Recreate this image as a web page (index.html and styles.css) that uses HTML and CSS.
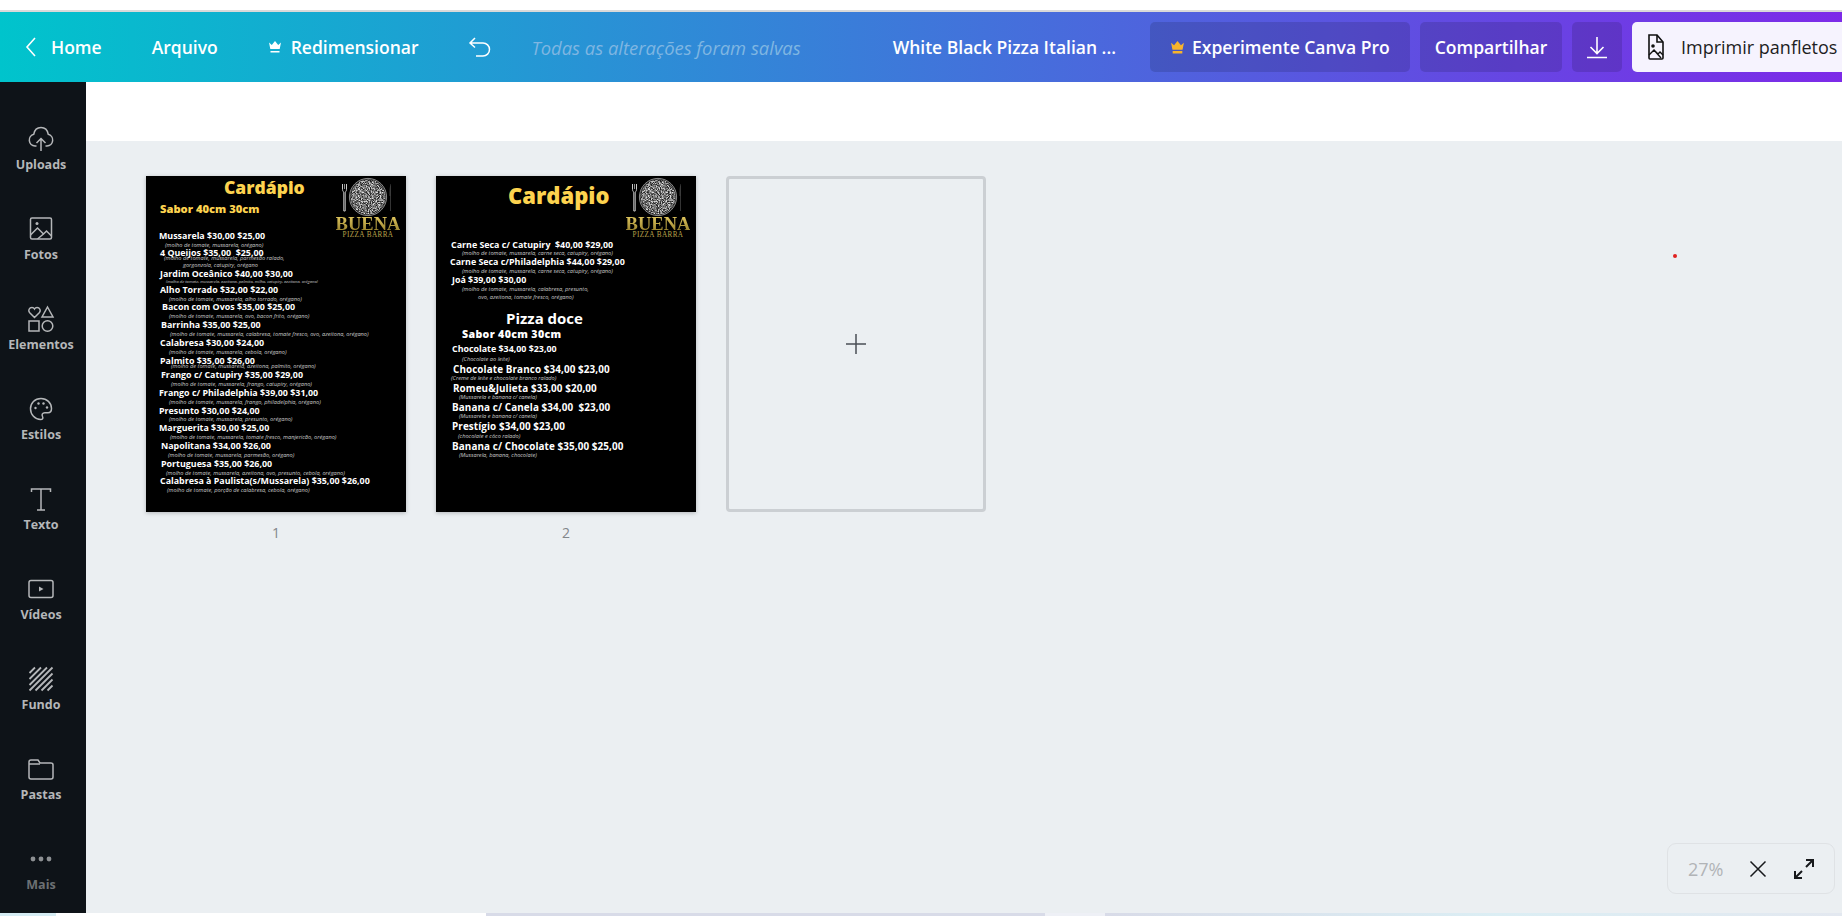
FILE: index.html
```html
<!DOCTYPE html>
<html lang="pt-BR">
<head>
<meta charset="utf-8">
<title>Canva</title>
<link rel="stylesheet" href="styles.css">
</head>
<body>
<svg class="defs" width="0" height="0" aria-hidden="true">
  <defs>
    <filter id="speckle" x="0" y="0" width="100%" height="100%">
      <feTurbulence type="fractalNoise" baseFrequency="0.9" numOctaves="2" seed="4"/>
      <feColorMatrix values="0 0 0 0 0.72  0 0 0 0 0.72  0 0 0 0 0.72  2.6 0 0 0 -0.85"/>
      <feComposite in2="SourceGraphic" operator="in"/>
    </filter>
    <symbol id="logo-art" viewBox="0 0 66 40">
      <circle cx="33" cy="20" r="18.5" fill="#222"/>
      <circle cx="33" cy="20" r="17.5" filter="url(#speckle)" fill="#888"/>
      <circle cx="33" cy="20" r="18.6" fill="none" stroke="#a8a8a8" stroke-width=".8"/>
      <path d="M7.5 7v5.5c0 1.4.8 2.2 1.3 2.6V34h1.4V15.100c.5-.4 1.300-1.200 1.300-2.600V7" fill="none" stroke="#c8c8c8" stroke-width="1"/>
      <path d="M9.500 7v5" stroke="#c8c8c8" stroke-width=".7"/>
      <path d="M55.500 7c-.9 3-1.100 7-1 12h.6v15h.9V7z" fill="#3a3a3a"/>
    </symbol>
  </defs>
</svg>

<div class="chrome-line"></div>
<header class="topbar">
  <nav class="nav">
    <svg class="ico-back" viewBox="0 0 12 22"><path d="M10 2 2 11l8 9" fill="none" stroke="#fff" stroke-width="1.600"/></svg>
    <span class="tb-text tb-home">Home</span>
    <span class="tb-text tb-file">Arquivo</span>
    <svg class="ico-crown" viewBox="0 0 14 14"><path d="M1 2.500 3.800 5 7 1l3.200 4L13 2.500l-1.300 6.500H2.300zM2.500 11h9v1.500h-9z" fill="#fff"/></svg>
    <span class="tb-text tb-resize">Redimensionar</span>
    <svg class="ico-undo" viewBox="0 0 24 22"><path d="M7 2 2 7l5 4.500M2.500 7H15a6.500 6.500 0 0 1 0 13H8" fill="none" stroke="#fff" stroke-width="1.500"/></svg>
    <span class="tb-saved">Todas as alterações foram salvas</span>
  </nav>
  <div class="actions">
    <span class="tb-text tb-title">White Black Pizza Italian ...</span>
    <button class="btn btn-pro"><svg class="ico-crown-gold" viewBox="0 0 14 14"><path d="M1 2.500 3.800 5 7 1l3.200 4L13 2.500l-1.300 6.500H2.300zM2.500 10.300h9v2.200h-9z" fill="#f8b42c"/></svg>Experimente Canva Pro</button>
    <button class="btn btn-share">Compartilhar</button>
    <button class="btn btn-dl"><svg class="ico-dl" viewBox="0 0 24 24"><path d="M12 2v16M5.500 12l6.500 6.500 6.500-6.500M2 22.500h20" fill="none" stroke="#fff" stroke-width="1.600"/></svg></button>
    <button class="btn btn-print"><svg class="ico-print" viewBox="0 0 18 26"><path d="M2 1h8l6 7v16a1 1 0 0 1-1 1H3a1 1 0 0 1-1-1z" fill="none" stroke="#111" stroke-width="1.600"/><path d="M10 1v7h6" fill="none" stroke="#111" stroke-width="1.600"/><circle cx="6" cy="12" r="1.800" fill="#111"/><path d="M2 21l5-5 4 4 2-2 3 3M7 16l7 8" fill="none" stroke="#111" stroke-width="1.400"/></svg>Imprimir panfletos</button>
  </div>
</header>

<div class="workspace">
  <aside class="sidebar">
    <div class="side-item">
      <svg class="side-ico" viewBox="0 0 28 28"><path d="M9.500 21H8a6 6 0 0 1-1.200-11.800C7.500 5 10.300 2.500 14 2.500s6.500 2.500 7.200 6.700A6 6 0 0 1 20 21h-1.500M14 26V14M9.500 18l4.500-4.500 4.500 4.500"/></svg>
      <span class="side-label">Uploads</span>
    </div>
    <div class="side-item">
      <svg class="side-ico" viewBox="0 0 28 28"><rect x="3.500" y="3" width="21" height="21" rx="1.500"/><path d="M3.500 20l7-7 6 6 3-3 5 5M10.500 24l6-5"/><circle cx="10" cy="8.500" r="1.500" class="fill"/></svg>
      <span class="side-label">Fotos</span>
    </div>
    <div class="side-item">
      <svg class="side-ico" viewBox="0 0 28 28"><path d="M7.500 12.500 2.500 7.500C.8 5.500 2.300 2.500 5 2.500c1.100 0 2 .6 2.500 1.500C8 3.100 8.900 2.500 10 2.500c2.700 0 4.200 3 2.500 5z"/><path d="M20.500 2 26 12H15z"/><rect x="2" y="16" width="10" height="10"/><circle cx="20.500" cy="21" r="5.300"/></svg>
      <span class="side-label">Elementos</span>
    </div>
    <div class="side-item">
      <svg class="side-ico" viewBox="0 0 28 28"><path d="M14 3.500C7.800 3.500 3.500 8 3.500 13.800c0 5.800 4.500 10.700 10 10.700 2.300 0 2.800-1.600 2-3-1-1.800 0-3.800 2.300-3.800h3.200c2.400 0 3.500-1.800 3.500-4.200C24.500 7.800 19.800 3.500 14 3.500z"/><circle cx="8.500" cy="13" r="1.200" class="fill"/><circle cx="11.500" cy="8.500" r="1.200" class="fill"/><circle cx="16.500" cy="8.500" r="1.200" class="fill"/><circle cx="20" cy="12.500" r="1.200" class="fill"/></svg>
      <span class="side-label">Estilos</span>
    </div>
    <div class="side-item">
      <svg class="side-ico" viewBox="0 0 28 28"><path d="M4.500 7V4h19v3M14 4v21M10 25h8"/></svg>
      <span class="side-label">Texto</span>
    </div>
    <div class="side-item">
      <svg class="side-ico" viewBox="0 0 28 28"><rect x="2" y="5.500" width="24" height="17" rx="2"/><path d="M12 11.500v5l4.500-2.500z" class="fill"/></svg>
      <span class="side-label">Vídeos</span>
    </div>
    <div class="side-item">
      <svg class="side-ico" viewBox="0 0 28 28"><path d="M2.500 8 8 2.500M2.500 14 14 2.500M2.500 20 20 2.500M2.500 25.500 25.500 2.500M8.500 25.500l17-17M14.500 25.500l11-11M20.500 25.500l5-5" stroke-width="1.800"/></svg>
      <span class="side-label">Fundo</span>
    </div>
    <div class="side-item">
      <svg class="side-ico" viewBox="0 0 28 28"><path d="M2 7a2 2 0 0 1 2-2h7l2 3h11a2 2 0 0 1 2 2v12a2 2 0 0 1-2 2H4a2 2 0 0 1-2-2z"/><path d="M2 9h11"/></svg>
      <span class="side-label">Pastas</span>
    </div>
    <div class="side-item side-more">
      <svg class="side-ico" viewBox="0 0 28 28"><circle cx="6" cy="14" r="2.400" class="fill"/><circle cx="14" cy="14" r="2.400" class="fill"/><circle cx="22" cy="14" r="2.400" class="fill"/></svg>
      <span class="side-label">Mais</span>
    </div>
  </aside>

  <main class="main">
    <div class="white-strip"></div>
    <div class="canvas">
      <section class="thumb">
        <div class="page">
          <h2 class="line title p1-title">Cardápio</h2>
          <p class="line head p1-head">Sabor 40cm 30cm</p>
          <div class="logo"><svg class="logo-art"><use href="#logo-art"/></svg><span class="logo-name">BUENA</span><span class="logo-sub">PIZZA BARRA</span></div>
          <p class="line item a1">Mussarela $30,00 $25,00</p>
          <p class="line sub b1">(molho de tomate, mussarela, orégano)</p>
          <p class="line item a2">4 Queijos $35,00&nbsp; $25,00</p>
          <p class="line sub b2">(molho de tomate, mussarela, parmesão ralado,</p>
          <p class="line sub b2x">gorgonzola, catupiry, orégano</p>
          <p class="line item a3">Jardim Oceânico $40,00 $30,00</p>
          <p class="line sub tiny b3">(molho de tomate, mussarela, azeitona, palmito, milho, catupiry, azeitona, orégano)</p>
          <p class="line item a4">Alho Torrado $32,00 $22,00</p>
          <p class="line sub b4">(molho de tomate, mussarela, alho torrado, orégano)</p>
          <p class="line item a5">Bacon com Ovos $35,00 $25,00</p>
          <p class="line sub b5">(molho de tomate, mussarela, ovo, bacon frito, orégano)</p>
          <p class="line item a6">Barrinha $35,00 $25,00</p>
          <p class="line sub b6">(molho de tomate, mussarela, calabresa, tomate fresco, ovo, azeitona, orégano)</p>
          <p class="line item a7">Calabresa $30,00 $24,00</p>
          <p class="line sub b7">(molho de tomate, mussarela, cebola, orégano)</p>
          <p class="line item a8">Palmito $35,00 $26,00</p>
          <p class="line sub b8">(molho de tomate, mussarela, azeitona, palmito, orégano)</p>
          <p class="line item a9">Frango c/ Catupiry $35,00 $29,00</p>
          <p class="line sub b9">(molho de tomate, mussarela, frango, catupiry, orégano)</p>
          <p class="line item a10">Frango c/ Philadelphia $39,00 $31,00</p>
          <p class="line sub b10">(molho de tomate, mussarela, frango, philadelphia, orégano)</p>
          <p class="line item a11">Presunto $30,00 $24,00</p>
          <p class="line sub b11">(molho de tomate, mussarela, presunto, orégano)</p>
          <p class="line item a12">Marguerita $30,00 $25,00</p>
          <p class="line sub b12">(molho de tomate, mussarela, tomate fresco, manjericão, orégano)</p>
          <p class="line item a13">Napolitana $34,00 $26,00</p>
          <p class="line sub b13">(molho de tomate, mussarela, parmesão, orégano)</p>
          <p class="line item a14">Portuguesa $35,00 $26,00</p>
          <p class="line sub b14">(molho de tomate, mussarela, azeitona, ovo, presunto, cebola, orégano)</p>
          <p class="line item a15">Calabresa à Paulista(s/Mussarela) $35,00 $26,00</p>
          <p class="line sub b15">(molho de tomate, porção de calabresa, cebola, orégano)</p>
        </div>
        <span class="page-num">1</span>
      </section>

      <section class="thumb">
        <div class="page">
          <h2 class="line title p2-title">Cardápio</h2>
          <div class="logo"><svg class="logo-art"><use href="#logo-art"/></svg><span class="logo-name">BUENA</span><span class="logo-sub">PIZZA BARRA</span></div>
          <p class="line item c1">Carne Seca c/ Catupiry&nbsp; $40,00 $29,00</p>
          <p class="line sub d1">(molho de tomate, mussarela, carne seca, catupiry, orégano)</p>
          <p class="line item c2">Carne Seca c/Philadelphia $44,00 $29,00</p>
          <p class="line sub d2">(molho de tomate, mussarela, carne seca, catupiry, orégano)</p>
          <p class="line item c3">Joá $39,00 $30,00</p>
          <p class="line sub d3">(molho de tomate, mussarela, calabresa, presunto,</p>
          <p class="line sub d3x">ovo, azeitona, tomate fresco, orégano)</p>
          <p class="line doce">Pizza doce</p>
          <p class="line head p2-head">Sabor 40cm 30cm</p>
          <p class="line item c4">Chocolate $34,00 $23,00</p>
          <p class="line sub d4">(Chocolate ao leite)</p>
          <p class="line item wide c5">Chocolate Branco $34,00 $23,00</p>
          <p class="line sub d5">(Creme de leite e chocolate branco ralado)</p>
          <p class="line item wide c6">Romeu&amp;Julieta $33,00 $20,00</p>
          <p class="line sub d6">(Mussarela e banana c/ canela)</p>
          <p class="line item wide c7">Banana c/ Canela $34,00&nbsp; $23,00</p>
          <p class="line sub d7">(Mussarela e banana c/ canela)</p>
          <p class="line item wide c8">Prestígio $34,00 $23,00</p>
          <p class="line sub d8">(chocolate e côco ralado)</p>
          <p class="line item wide c9">Banana c/ Chocolate $35,00 $25,00</p>
          <p class="line sub d9">(Mussarela, banana, chocolate)</p>
        </div>
        <span class="page-num">2</span>
      </section>

      <button class="add-page"><svg class="ico-plus" viewBox="0 0 20 20"><path d="M10 0v20M0 10h20" fill="none" stroke="#4a4f55" stroke-width="1.500"/></svg></button>

      <span class="red-dot"></span>
      <div class="zoom-panel">
        <span class="zoom-val">27%</span>
        <svg class="ico-x" viewBox="0 0 18 18"><path d="M1.500 1.500l15 15M16.500 1.500l-15 15" fill="none" stroke="#17191c" stroke-width="1.500"/></svg>
        <svg class="ico-expand" viewBox="0 0 22 22"><path d="M13 2h7v7M20 2l-7 7M2 13v7h7M2 20l7-7" fill="none" stroke="#17191c" stroke-width="2"/></svg>
      </div>
    </div>
  </main>
</div>
<div class="bottom-strip"></div>
</body>
</html>
```
FILE: styles.css
```css
* { box-sizing: border-box; }
html, body { margin: 0; padding: 0; height: 100%; overflow: hidden; }
body {
  width: 1842px; height: 916px; display: flex; flex-direction: column;
  background: #fff; font-family: "Open Sans", "Liberation Sans", sans-serif;
}
.defs { position: absolute; }

.chrome-line { height: 12px; flex: none; background: #fff; border-bottom: 2px solid #d9d9d9; }

.topbar {
  height: 70px; flex: none; display: flex; align-items: center; justify-content: space-between;
  background: linear-gradient(90deg, #00c4cc 0%, #7d2ae8 100%);
  color: #fff;
}
.nav { display: flex; align-items: center; padding-left: 25px; }
.actions { display: flex; align-items: center; }
.tb-text { font-size: 17.500px; font-weight: 600; white-space: nowrap; }
.ico-back { width: 12px; height: 22px; }
.tb-home { margin-left: 14px; }
.tb-file { margin-left: 50px; }
.ico-crown { width: 14px; height: 14px; margin-left: 50px; }
.tb-resize { margin-left: 9px; }
.ico-undo { width: 24px; height: 22px; margin-left: 49px; }
.tb-saved { margin-left: 40px; font-size: 18.400px; font-style: italic; color: #7fb6e2; white-space: nowrap; }
.tb-title { margin-right: 34px; }

.btn {
  height: 50px; border: 0; border-radius: 5px; color: #fff; font: 600 17.500px "Open Sans", sans-serif;
  display: flex; align-items: center; background: rgba(0, 0, 0, .13); padding: 0; margin-left: 10px; white-space: nowrap;
}
.btn-pro { width: 260px; padding-left: 20px; margin-left: 0; }
.ico-crown-gold { width: 15px; height: 15px; margin-right: 7px; }
.btn-share { width: 142px; justify-content: center; }
.btn-dl { width: 50px; justify-content: center; }
.ico-dl { width: 24px; height: 24px; }
.btn-print {
  width: 210px; padding-left: 15px; background: #f6f3fe; color: #1d1d22; font-weight: 400; font-size: 18px;
  border-radius: 5px 0 0 5px;
}
.ico-print { width: 18px; height: 26px; margin-right: 16px; }

.workspace { flex: 1; display: flex; min-height: 0; }
.sidebar {
  width: 86px; flex: none; background: #0e1318; padding: 43px 4px 0 0;
  display: flex; flex-direction: column; align-items: center;
}
.side-item { height: 90px; flex: none; display: flex; flex-direction: column; align-items: center; gap: 4px; }
.side-ico { width: 28px; height: 28px; fill: none; stroke: #b5b7b9; stroke-width: 1.5; }
.side-ico .fill { fill: #b5b7b9; stroke: none; }
.side-label { font-size: 12.500px; line-height: 16px; font-weight: 700; color: #b5b7b9; }
.side-more .side-label { color: #6c7073; }
.side-more .side-ico .fill { fill: #8d9093; }

.main { flex: 1; display: flex; flex-direction: column; min-width: 0; }
.white-strip { height: 59px; flex: none; background: #fff; }
.canvas {
  position: relative; flex: 1; display: flex; gap: 30px; align-items: flex-start;
  background: #ebeff2; padding: 35px 60px;
}
.thumb { display: flex; flex-direction: column; align-items: center; }
.page {
  position: relative; width: 260px; height: 336px; background: #000; overflow: hidden;
  box-shadow: 0 1px 4px rgba(14, 19, 24, .25);
}
.page-num { margin-top: 11px; font-size: 14px; line-height: 20px; color: #82868a; }
.add-page {
  width: 260px; height: 336px; padding: 0; background: transparent; border: 3px solid #cbcfd3; border-radius: 4px;
  display: flex; align-items: center; justify-content: center;
}
.ico-plus { width: 20px; height: 20px; }
.red-dot { position: absolute; left: 1587px; top: 113px; width: 4px; height: 4px; border-radius: 50%; background: #e02020; }
.zoom-panel {
  position: absolute; left: 1581px; top: 702px; width: 168px; height: 51px;
  border: 1px solid #dfe2e5; border-radius: 9px; background: #ebeff2;
  display: flex; align-items: center; padding-left: 20px;
}
.zoom-val { font-size: 18px; color: #b1b4b7; width: 61px; }
.ico-x { width: 18px; height: 18px; }
.ico-expand { width: 22px; height: 22px; margin-left: 26px; }

.bottom-strip {
  height: 3px; flex: none;
  background: linear-gradient(90deg, #d5ecf3 0 56px, #fff 56px 486px, #d8dbe8 486px 1045px, #eef0f6 1045px 1105px, #d8dbe8 1105px, #dbeef4 1500px, #e3e8f0 100%);
}

/* Design pages: a free canvas, every line of text is placed on it */
.line { position: absolute; margin: 0; white-space: nowrap; line-height: 10px; }
.title { color: #fdd34f; font-weight: 800; line-height: 26px; }
.head { color: #fdd34f; font-size: 11.200px; font-weight: 800; line-height: 14px; }
.item { color: #fff; font-size: 8.900px; font-weight: 700; }
.item.wide { font-size: 9.900px; letter-spacing: .1px; }
.sub { color: #c9c9c9; font-size: 5.650px; font-style: italic; }
.sub.tiny { font-size: 4.100px; }

.p1-title { left: 78px; top: -2px; font-size: 17.500px; }
.p1-head { left: 14px; top: 26px; }
.p2-title { left: 72px; top: 6px; font-size: 22px; }
.p2-head { left: 26px; top: 151px; color: #fff; font-size: 10.600px; letter-spacing: .35px; }
.doce { left: 70px; top: 134px; color: #fff; font-size: 15px; font-weight: 700; line-height: 16px; }

.logo { position: absolute; left: 189px; top: 1px; width: 66px; display: flex; flex-direction: column; align-items: center; }
.logo-art { width: 66px; height: 40px; }
.logo-name {
  font: 700 18.500px/14px "Liberation Serif", serif; color: transparent;
  background: linear-gradient(180deg, #dcc35c, #9a842f); -webkit-background-clip: text; background-clip: text;
}
.logo-sub { font: 400 7.200px/9px "Liberation Serif", serif; color: #b9a24a; letter-spacing: .4px; }

.a1 { left: 13px; top: 55px; }   .b1 { left: 19px; top: 64px; }
.a2 { left: 14px; top: 72px; }   .b2 { left: 18px; top: 77px; }   .b2x { left: 37px; top: 84px; }
.a3 { left: 14px; top: 93px; }   .b3 { left: 20px; top: 101px; }
.a4 { left: 14px; top: 109px; }  .b4 { left: 23px; top: 118px; }
.a5 { left: 16px; top: 126px; }  .b5 { left: 23px; top: 135px; }
.a6 { left: 15px; top: 144px; }  .b6 { left: 24px; top: 153px; }
.a7 { left: 14px; top: 162px; }  .b7 { left: 23px; top: 171px; }
.a8 { left: 14px; top: 180px; }  .b8 { left: 25px; top: 185px; }
.a9 { left: 15px; top: 194px; }  .b9 { left: 25px; top: 203px; }
.a10 { left: 13px; top: 212px; } .b10 { left: 23px; top: 221px; }
.a11 { left: 13px; top: 230px; } .b11 { left: 23px; top: 238px; }
.a12 { left: 13px; top: 247px; } .b12 { left: 24px; top: 256px; }
.a13 { left: 15px; top: 265px; } .b13 { left: 22px; top: 274px; }
.a14 { left: 15px; top: 283px; } .b14 { left: 20px; top: 292px; }
.a15 { left: 14px; top: 300px; } .b15 { left: 21px; top: 309px; }

.c1 { left: 15px; top: 64px; }   .d1 { left: 26px; top: 72px; }
.c2 { left: 14px; top: 81px; }   .d2 { left: 26px; top: 90px; }
.c3 { left: 16px; top: 99px; }   .d3 { left: 26px; top: 108px; }  .d3x { left: 42px; top: 116px; }
.c4 { left: 16px; top: 168px; }  .d4 { left: 26px; top: 178px; }
.c5 { left: 17px; top: 188px; }  .d5 { left: 15px; top: 197px; }
.c6 { left: 17px; top: 207px; }  .d6 { left: 23px; top: 216px; }
.c7 { left: 16px; top: 226px; }  .d7 { left: 23px; top: 235px; }
.c8 { left: 16px; top: 245px; }  .d8 { left: 22px; top: 255px; }
.c9 { left: 16px; top: 265px; }  .d9 { left: 23px; top: 274px; }
```
